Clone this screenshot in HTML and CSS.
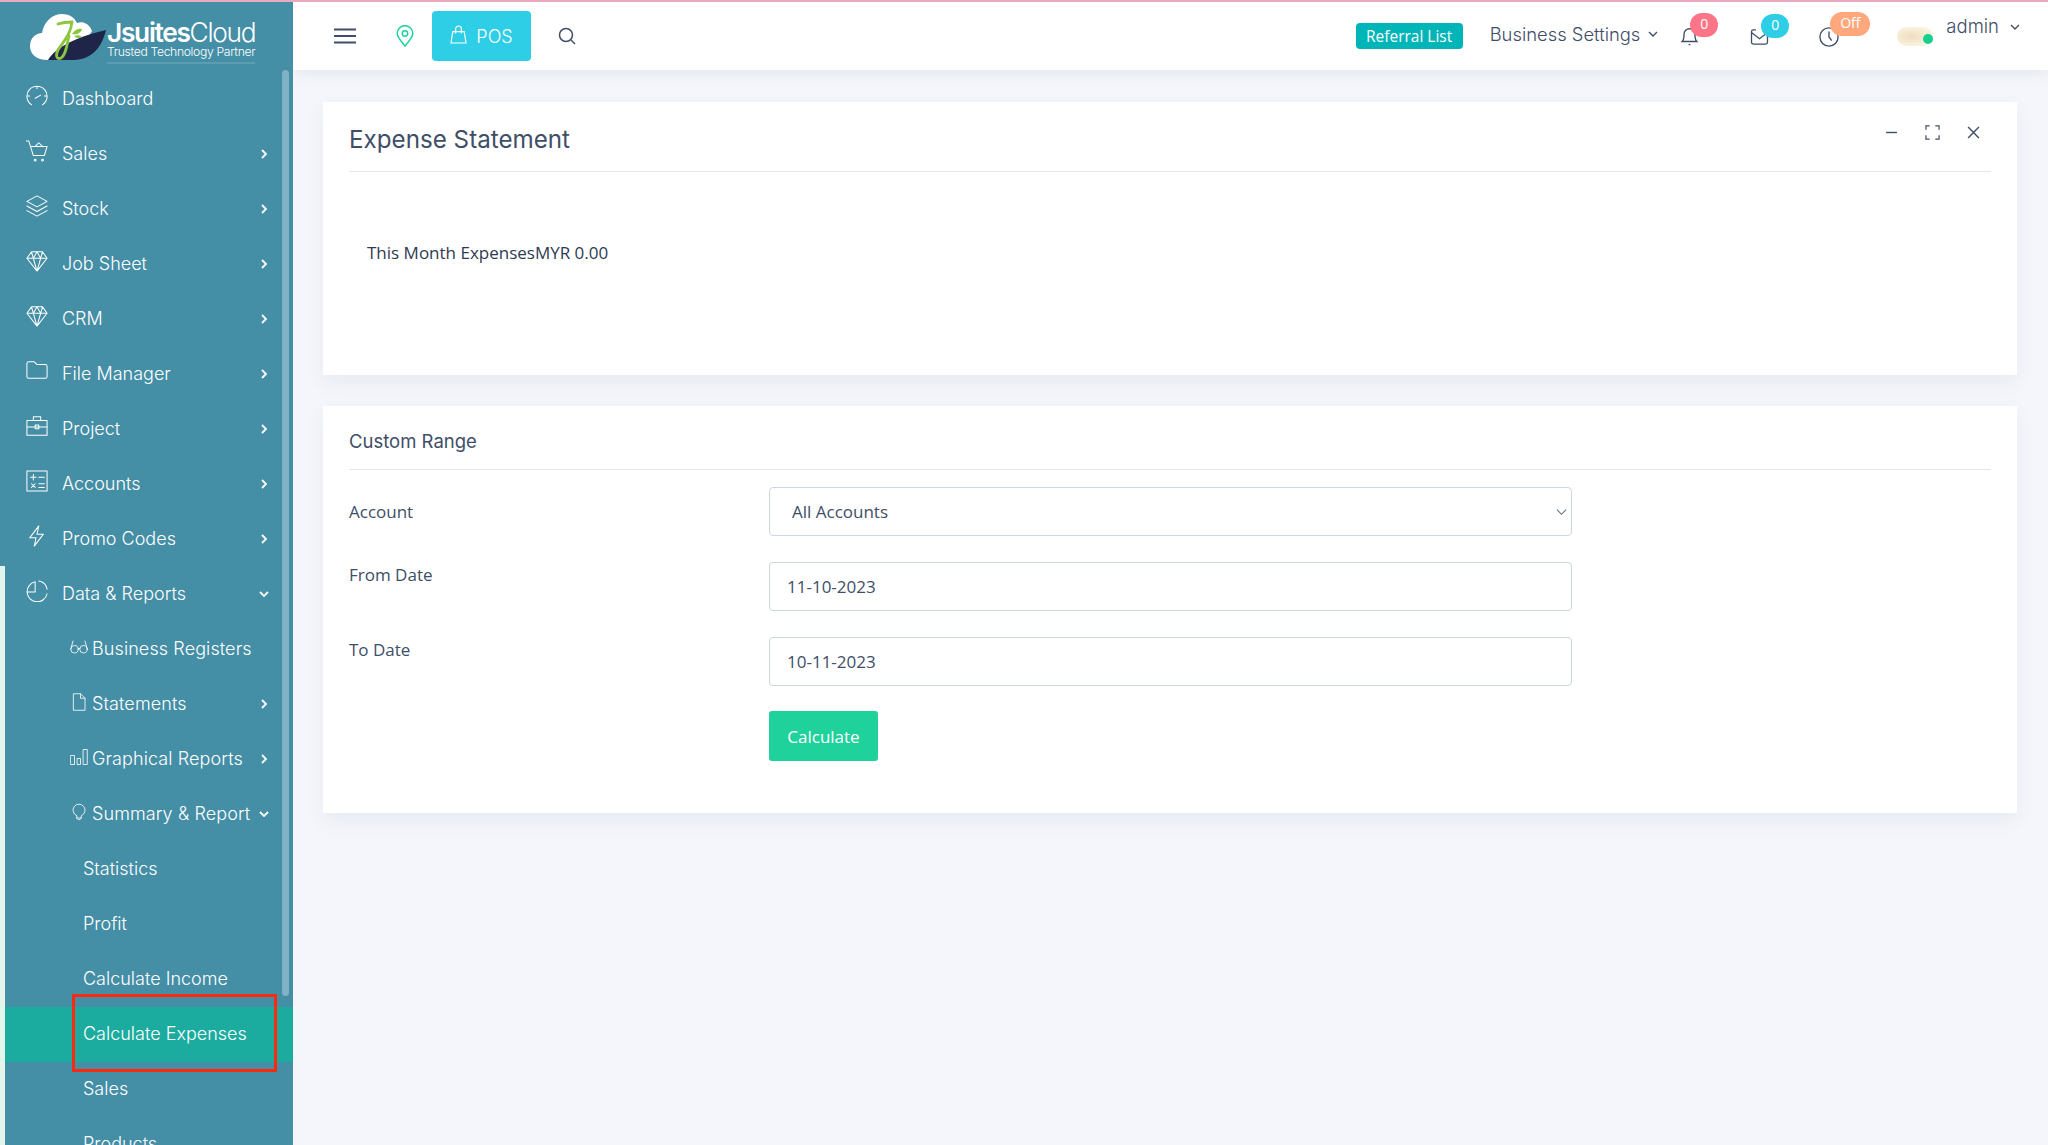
FILE: index.html
```html
<!DOCTYPE html>
<html lang="en">
<head>
<meta charset="utf-8">
<title>Expense Statement</title>
<link rel="stylesheet" href="styles.css">
</head>
<body>
<div class="page">
  <aside class="sidebar">
    <div class="brand">
      <svg class="brand-mark" viewBox="0 0 76 50" width="76" height="50">
        <path d="M18 47C6 47 0 41 0 33c0-8 6-13 12-13C14 8 23 1 32 1c7 0 12 3 15 9 5-2 12 0 15 8L44 47z" fill="#fff"/>
        <path d="M18 47C26 33 50 23 76 17C71 37 60 47 42 47z" fill="#1e2548"/>
        <path d="M28 11c6-2 10-2 14-2-1 12-9 20-14 28-3 6-1 10 3 8 5-3 6-14 8-22" fill="none" stroke="#8cc63f" stroke-width="2.800" stroke-linecap="round"/>
        <path d="M42 21c3-5 7-6 10-5-1 4-5 6-10 5zM44 23c3-1 6-1 8 1-3 2-6 1-8-1z" fill="#8cc63f"/>
      </svg>
      <div class="brand-text">
        <div class="brand-name"><b>Jsuites</b>Cloud</div>
        <div class="brand-tag">Trusted Technology Partner</div>
      </div>
    </div>
    <nav class="menu">
      <a class="item"><svg class="ic" viewBox="0 0 24 24"><path d="M6 21.500a11 11 0 1 1 12 0M12 1v3M1 12h3M20 12h3M10 14.500l6-3.500"/></svg><span class="label">Dashboard</span></a>
      <a class="item"><svg class="ic" viewBox="0 0 24 24"><path d="M0 1h3l5 16h12l3-10H6M10 7l4-4 4 4"/><circle cx="10" cy="22" r="1"/><circle cx="18" cy="22" r="1"/></svg><span class="label">Sales</span><svg class="chev" viewBox="0 0 10 10"><path d="M3 1l4 4-4 4"/></svg></a>
      <a class="item"><svg class="ic" viewBox="0 0 24 24"><path d="M12 1L1 7l11 6 11-6zM1 12l11 6 11-6M1 17l11 6 11-6"/></svg><span class="label">Stock</span><svg class="chev" viewBox="0 0 10 10"><path d="M3 1l4 4-4 4"/></svg></a>
      <a class="item"><svg class="ic" viewBox="0 0 24 24"><path d="M6 2h12l5 7-11 14L1 9zM1 9h22M8 9l4 14 4-14M6 2l2 7 4-7 4 7 2-7"/></svg><span class="label">Job Sheet</span><svg class="chev" viewBox="0 0 10 10"><path d="M3 1l4 4-4 4"/></svg></a>
      <a class="item"><svg class="ic" viewBox="0 0 24 24"><path d="M6 2h12l5 7-11 14L1 9zM1 9h22M8 9l4 14 4-14M6 2l2 7 4-7 4 7 2-7"/></svg><span class="label">CRM</span><svg class="chev" viewBox="0 0 10 10"><path d="M3 1l4 4-4 4"/></svg></a>
      <a class="item"><svg class="ic" viewBox="0 0 24 24"><path d="M1 4a2 2 0 0 1 2-2h6l3 3h9a2 2 0 0 1 2 2v11a2 2 0 0 1-2 2H3a2 2 0 0 1-2-2z"/></svg><span class="label">File Manager</span><svg class="chev" viewBox="0 0 10 10"><path d="M3 1l4 4-4 4"/></svg></a>
      <a class="item"><svg class="ic" viewBox="0 0 24 24"><path d="M1 6h22v16H1zM1 13h22M8 6V2h8v4M10 11h4v4h-4z"/></svg><span class="label">Project</span><svg class="chev" viewBox="0 0 10 10"><path d="M3 1l4 4-4 4"/></svg></a>
      <a class="item"><svg class="ic" viewBox="0 0 24 24"><path d="M1 1h22v22H1zM5 8h6M8 5v6M14 8h6M6 15l4 4M10 15l-4 4M14 15h6M14 19h6"/></svg><span class="label">Accounts</span><svg class="chev" viewBox="0 0 10 10"><path d="M3 1l4 4-4 4"/></svg></a>
      <a class="item"><svg class="ic" viewBox="0 0 24 24"><path d="M14 1L4 14h7l-2 9 10-13h-7z"/></svg><span class="label">Promo Codes</span><svg class="chev" viewBox="0 0 10 10"><path d="M3 1l4 4-4 4"/></svg></a>
      <a class="item"><svg class="ic" viewBox="0 0 24 24"><path d="M10 2a11 11 0 1 0 13 13M14 1a11 11 0 0 1 9 9M10 2v11H1"/></svg><span class="label">Data &amp; Reports</span><svg class="chev" viewBox="0 0 10 10"><path d="M1 3l4 4 4-4"/></svg></a>

      <a class="item sub"><svg class="ic" viewBox="0 0 24 24"><circle cx="6" cy="15" r="5"/><circle cx="18" cy="15" r="5"/><path d="M11 14h2M1 15l3-11M23 15L20 4"/></svg><span class="label">Business Registers</span></a>
      <a class="item sub"><svg class="ic" viewBox="0 0 24 24"><path d="M5 1h9l6 6v16H5zM14 1v6h6"/></svg><span class="label">Statements</span><svg class="chev" viewBox="0 0 10 10"><path d="M3 1l4 4-4 4"/></svg></a>
      <a class="item sub"><svg class="ic" viewBox="0 0 24 24"><path d="M1 10h5v12H1zM10 14h4v8h-4zM18 2h5v20h-5z"/></svg><span class="label">Graphical Reports</span><svg class="chev" viewBox="0 0 10 10"><path d="M3 1l4 4-4 4"/></svg></a>
      <a class="item sub"><svg class="ic" viewBox="0 0 24 24"><path d="M9 17a8 8 0 1 1 6 0v3H9zM9 20c0 3 6 3 6 0"/></svg><span class="label">Summary &amp; Report</span><svg class="chev" viewBox="0 0 10 10"><path d="M1 3l4 4 4-4"/></svg></a>

      <a class="item subsub"><span class="label">Statistics</span></a>
      <a class="item subsub"><span class="label">Profit</span></a>
      <a class="item subsub"><span class="label">Calculate Income</span></a>
      <a class="item subsub active"><span class="label">Calculate Expenses</span></a>
      <a class="item subsub"><span class="label">Sales</span></a>
      <a class="item subsub"><span class="label">Products</span></a>
    </nav>
    <div class="scroll-thumb"></div>
    <div class="callout"></div>
  </aside>

  <div class="content">
    <header class="topbar">
      <div class="top-left">
        <svg class="burger" viewBox="0 0 22 16"><path d="M0 1.500h22M0 8h22M0 14.500h22"/></svg>
        <svg class="pin" viewBox="0 0 18 22"><path d="M9 21C4 15 1.200 12 1.200 8.500a7.800 7.800 0 0 1 15.600 0C16.800 12 14 15 9 21z"/><circle cx="9" cy="8.500" r="2.700"/></svg>
        <a class="pos"><svg viewBox="0 0 18 20"><path d="M3 7h12l2 12H1zM6 9V4a3 3 0 0 1 6 0v5"/></svg>POS</a>
        <svg class="search" viewBox="0 0 18 18"><circle cx="8" cy="8" r="6.500"/><path d="M13 13l4 4"/></svg>
      </div>
      <div class="top-right">
        <a class="referral">Referral List</a>
        <a class="settings">Business Settings<svg class="down" viewBox="0 0 10 10"><path d="M1 3l4 4 4-4"/></svg></a>
        <span class="tool tool-bell"><svg viewBox="0 0 20 22"><path d="M2 17c2-2 2-4 2-8a6 6 0 0 1 12 0c0 4 0 6 2 8zM9 20.500h2"/></svg><b class="badge red">0</b></span>
        <span class="tool tool-mail"><svg viewBox="0 0 20 18"><path d="M6 1H3a2 2 0 0 0-2 2v12a2 2 0 0 0 2 2h14a2 2 0 0 0 2-2V3M1 4l9 7 9-7"/></svg><b class="badge blue">0</b></span>
        <span class="tool tool-clock"><svg viewBox="0 0 22 22"><circle cx="11" cy="11" r="10"/><path d="M11 5v6l3 4"/></svg><b class="badge orange">Off</b></span>
        <span class="user"><span class="avatar"><i class="dot"></i></span><span class="uname">admin</span><svg class="down" viewBox="0 0 10 10"><path d="M1 3l4 4 4-4"/></svg></span>
      </div>
    </header>

    <main class="main">
      <section class="card card-statement">
        <div class="card-head">
          <h1>Expense Statement</h1>
          <div class="card-tools">
            <svg viewBox="0 0 12 12"><path d="M1 6h10"/></svg>
            <svg viewBox="0 0 16 16"><path d="M1 5V1h4M11 1h4v4M15 11v4h-4M5 15H1v-4"/></svg>
            <svg viewBox="0 0 12 12"><path d="M1 1l10 10M11 1L1 11"/></svg>
          </div>
        </div>
        <p class="stat">This Month ExpensesMYR 0.00</p>
      </section>

      <section class="card card-range">
        <h2>Custom Range</h2>
        <form class="form">
          <label class="field-label center" for="acc">Account</label>
          <div class="select-wrap">
            <select id="acc" class="control"><option>All Accounts</option></select>
            <svg viewBox="0 0 12 8"><path d="M1 1.500l5 5 5-5"/></svg>
          </div>
          <label class="field-label" for="from">From Date</label>
          <input id="from" class="control date" value="11-10-2023">
          <label class="field-label" for="to">To Date</label>
          <input id="to" class="control date" value="10-11-2023">
          <span></span>
          <div><button type="button" class="calc">Calculate</button></div>
        </form>
      </section>
    </main>
  </div>
</div>
</body>
</html>
```

FILE: styles.css
```css
* { box-sizing: border-box; }
html, body { margin: 0; height: 100%; overflow: hidden; }
body {
  background: #f4f6fb;
  font-family: "Open Sans", "Noto Sans", sans-serif;
  color: #404e67;
  border-top: 2px solid #e9a9bf;
}
.page { display: grid; grid-template-columns: 293px 1fr; height: 1143px; }

/* Sidebar */
.sidebar {
  position: relative;
  background: #448ea6;
  overflow: hidden;
  height: 1143px;
  z-index: 2;
}
.sidebar::before {
  content: "";
  position: absolute;
  left: 0; top: 564px; bottom: 0;
  width: 5px;
  background: #e2f6ec;
  z-index: 1;
}
.brand {
  height: 68px;
  display: flex;
  align-items: flex-start;
  padding: 11px 0 0 30px;
}
.brand-mark { display: block; flex: none; margin-right: 1px; }
.brand-text { color: #fff; font-family: "Inter", sans-serif; padding-top: 8px; }
.brand-name { font-size: 26.300px; line-height: 24px; letter-spacing: -1.300px; font-weight: 300; white-space: nowrap; }
.brand-name b { font-weight: 600; }
.brand-tag { font-size: 12.200px; line-height: 14px; letter-spacing: -.35px; white-space: nowrap; font-weight: 300; border-bottom: 2px solid #5d9db2; padding-bottom: 3px; }
.menu { display: flex; flex-direction: column; padding-top: 2px; }
.item {
  height: 55px;
  flex: none;
  display: flex;
  align-items: center;
  padding: 0 24px 2px 26px;
  color: #fff;
  font-family: "Inter", sans-serif;
  font-size: 18px;
  font-weight: 300;
  white-space: nowrap;
}
.ic {
  width: 22px; height: 22px; flex: none;
  margin: -5px 14px 0 0;
  fill: none; stroke: #fff; stroke-width: 1.100;
  stroke-linejoin: round; stroke-linecap: round;
}
.chev {
  width: 10px; height: 10px; flex: none;
  margin-left: auto; margin-right: 0;
  fill: none; stroke: #fff; stroke-width: 1.800;
}
.sub { padding-left: 70px; }
.sub .ic { width: 18px; height: 18px; margin: -4px 4px 0 0; }
.sub .label { letter-spacing: .1px; }
.subsub { padding-left: 83px; }
.active { background: #1bac9f; }
.scroll-thumb {
  position: absolute;
  left: 282px; top: 68px;
  width: 7px; height: 926px;
  border-radius: 4px;
  background: #7fb2c2;
}
.callout {
  position: absolute;
  left: 72px; top: 992px;
  width: 205px; height: 78px;
  border: 3px solid #fb2a0c;
  z-index: 3;
}

/* Topbar */
.content { display: flex; flex-direction: column; min-width: 0; }
.topbar {
  height: 68px;
  flex: none;
  background: #fff;
  display: flex;
  align-items: center;
  justify-content: space-between;
  box-shadow: 0 2px 14px rgba(70, 80, 110, .1);
  padding: 0 28px 0 41px;
}
.top-left { display: flex; align-items: center; }
.burger { width: 22px; height: 16px; fill: none; stroke: #404e67; stroke-width: 2; margin-right: 40px; }
.pin { width: 18px; height: 22px; fill: none; stroke: #1fd19b; stroke-width: 1.500; margin-right: 18px; }
.pos {
  width: 99px; height: 50px;
  border-radius: 4px;
  background: #2dcee6;
  color: #fff;
  display: flex; align-items: center; justify-content: center;
  gap: 9px;
  font-family: "Inter", sans-serif;
  font-size: 18px; font-weight: 300;
  margin-right: 27px;
}
.pos svg { width: 17px; height: 19px; fill: none; stroke: #fff; stroke-width: 1.200; margin-top: -3px; }
.search { width: 18px; height: 18px; fill: none; stroke: #404e67; stroke-width: 1.500; }
.top-right { display: flex; align-items: center; }
.referral {
  width: 107px; height: 26px;
  border-radius: 4px;
  background: #00b5b8;
  color: #fff;
  font-size: 15.500px; font-weight: 500;
  display: flex; align-items: center; justify-content: center;
  margin-right: 27px;
}
.settings {
  font-family: "Inter", sans-serif;
  font-size: 18.400px; font-weight: 300;
  display: flex; align-items: center;
  white-space: nowrap;
  margin-right: 22px;
  margin-top: -4px;
}
.down { width: 10px; height: 10px; fill: none; stroke: #404e67; stroke-width: 1.400; margin-left: 8px; flex: none; }
.tool { position: relative; display: block; flex: none; }
.tool > svg { display: block; width: 100%; height: 100%; fill: none; stroke: #404e67; stroke-width: 1.500; }
.tool-bell { width: 19px; height: 20px; margin-right: 51px; margin-top: 0; }
.tool-mail { width: 19px; height: 16px; margin-right: 49px; margin-top: 2px; }
.tool-clock { width: 22px; height: 20px; margin-right: 57px; margin-top: 2px; }
.badge {
  position: absolute;
  height: 24px; min-width: 28px;
  border-radius: 12px;
  color: #fff;
  font-size: 14px; font-weight: 400; line-height: 22px;
  text-align: center;
}
.tool-bell .badge { left: 10px; top: -13px; }
.tool-mail .badge { left: 11px; top: -15px; }
.tool-clock .badge { left: 12px; top: -15px; width: 40px; }
.red { background: #ff7588; }
.blue { background: #2dcee6; }
.orange { background: #ffa87d; }
.user { display: flex; align-items: flex-start; height: 40px; padding-top: 4px; }
.avatar {
  position: relative;
  display: block;
  width: 36px; height: 19px;
  margin: 7px 13px 0 0;
  border-radius: 10px;
  background: radial-gradient(ellipse at 40% 50%, #f0dcc0, #f8f3de 70%);
  flex: none;
}
.dot { position: absolute; right: 0; top: 7px; width: 10px; height: 10px; border-radius: 50%; background: #18cf8f; }
.uname { font-family: "Inter", sans-serif; font-size: 18.500px; line-height: 22px; font-weight: 300; margin-top: -5px; }
.user .down { margin: 2px 0 0 11px; }

/* Main */
.main { flex: 1; padding: 32px 31px 0 30px; display: flex; flex-direction: column; gap: 31px; }
.card { background: #fff; box-shadow: 0 8px 18px rgba(70, 80, 110, .07); flex: none; padding: 0 26px; }
.card-statement { height: 273px; }
.card-head {
  height: 70px;
  border-bottom: 1px solid #e4e7ed;
  display: flex;
  align-items: flex-start;
  justify-content: space-between;
}
h1 {
  margin: 23px 0 0;
  font-family: "Inter", sans-serif;
  font-size: 24.200px; line-height: 30px; font-weight: 400;
}
.card-tools { display: flex; align-items: center; gap: 27px; margin: 23px 11px 0 0; }
.card-tools svg { width: 13px; height: 13px; fill: none; stroke: #404e67; stroke-width: 1.300; }
.card-tools svg:nth-child(2) { width: 15px; height: 15px; }
.stat { margin: 69px 0 0 18px; font-size: 17px; line-height: 24px; color: #2e3a52; }
.card-range { height: 407px; }
h2 {
  margin: 0;
  height: 64px;
  padding-top: 23px;
  font-family: "Inter", sans-serif;
  font-size: 18.500px; line-height: 24px; font-weight: 400;
  border-bottom: 1px solid #e4e7ed;
}
.form {
  display: grid;
  grid-template-columns: 420px 803px;
  row-gap: 26px;
  padding-top: 17px;
  align-items: start;
}
.field-label { font-size: 17px; line-height: 24px; color: #404e67; padding-top: 1px; }
.center { align-self: center; padding-top: 0; }
.select-wrap { position: relative; }
.select-wrap svg {
  position: absolute;
  right: 5px; top: 21px;
  width: 11px; height: 8px;
  fill: none; stroke: #5f6f8c; stroke-width: 1.200;
  pointer-events: none;
}
.control {
  display: block;
  width: 100%;
  height: 49px;
  border: 1px solid #cdd5e4;
  border-radius: 4px;
  background: #fff;
  color: #404e67;
  font-family: "Open Sans", sans-serif;
  font-size: 17px;
  padding: 0 17px;
  outline: 0;
  appearance: none;
}
.date { padding-left: 17px; }
select.control { padding-left: 22px; }
.calc {
  display: block;
  width: 109px; height: 50px;
  margin-top: -1px;
  border: 0;
  border-radius: 3px;
  background: #1fd19b;
  color: #fff;
  font-family: "Open Sans", sans-serif;
  font-size: 17px;
  font-weight: 500;
}
```
